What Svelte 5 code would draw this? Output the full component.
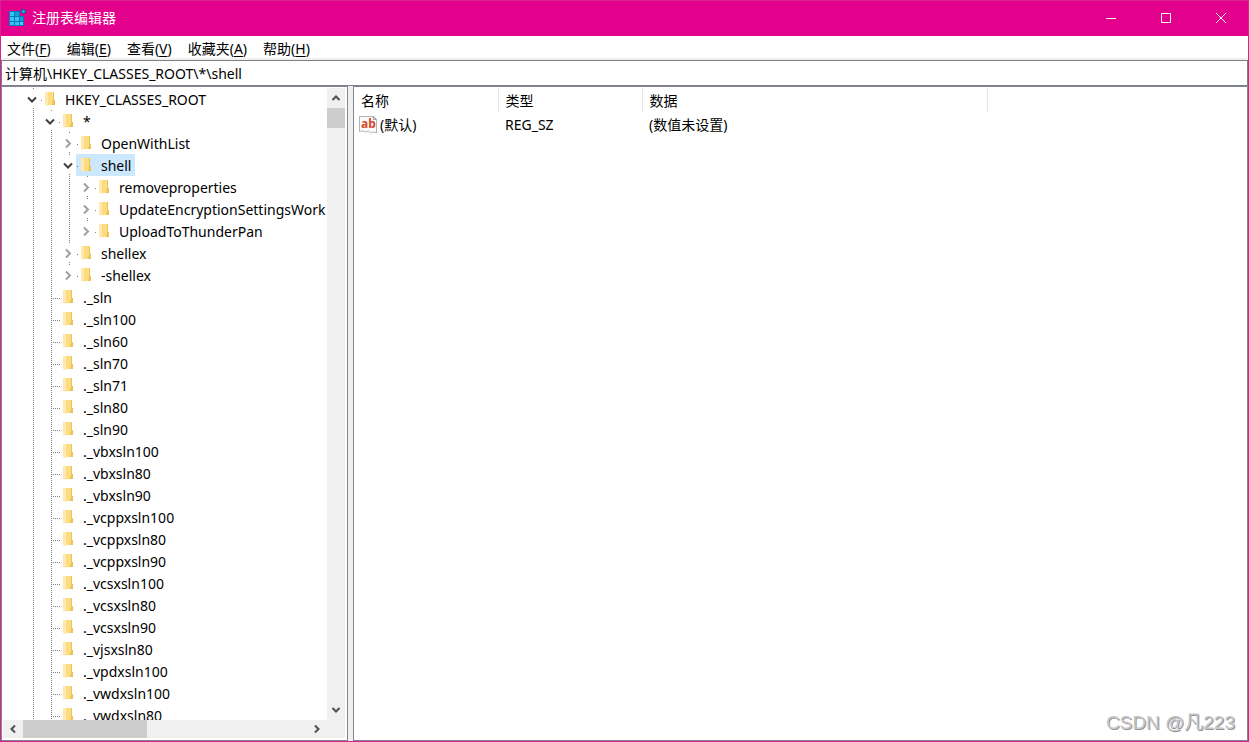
<script lang="ts">
	type Node = {
		name: string;
		// which guide columns carry a line past this row
		guides: boolean[];
		state: 'open' | 'closed' | 'leaf';
		last?: boolean;
	};

	const menus = [
		['文件', 'F'],
		['编辑', 'E'],
		['查看', 'V'],
		['收藏夹', 'A'],
		['帮助', 'H']
	];

	const leaves = [
		'._sln', '._sln100', '._sln60', '._sln70', '._sln71', '._sln80', '._sln90',
		'._vbxsln100', '._vbxsln80', '._vbxsln90',
		'._vcppxsln100', '._vcppxsln80', '._vcppxsln90',
		'._vcsxsln100', '._vcsxsln80', '._vcsxsln90',
		'._vjsxsln80', '._vpdxsln100', '._vwdxsln100', '._vwdxsln80'
	];

	const nodes: Node[] = [
		{ name: 'HKEY_CLASSES_ROOT', guides: [], state: 'open' },
		{ name: '*', guides: [true], state: 'open' },
		{ name: 'OpenWithList', guides: [true, true], state: 'closed' },
		{ name: 'shell', guides: [true, true], state: 'open' },
		{ name: 'removeproperties', guides: [true, true, true], state: 'closed' },
		{ name: 'UpdateEncryptionSettingsWork', guides: [true, true, true], state: 'closed' },
		{ name: 'UploadToThunderPan', guides: [true, true, true], state: 'closed', last: true },
		{ name: 'shellex', guides: [true, true], state: 'closed' },
		{ name: '-shellex', guides: [true, true], state: 'closed', last: true },
		...leaves.map((name): Node => ({ name, guides: [true], state: 'leaf' }))
	];

	let selected = $state('shell');
	let path = $state('计算机\\HKEY_CLASSES_ROOT\\*\\shell');
</script>

{#snippet arrow(direction: string)}
	<svg class="arrow {direction}" width="10" height="10" viewBox="0 0 10 10" aria-hidden="true">
		<path d="M1.5 3 L5 6.5 L8.5 3" />
	</svg>
{/snippet}

<div class="window">
	<header class="titlebar">
		<svg class="logo" width="17" height="17" viewBox="0 0 17 17" aria-hidden="true">
			<path fill="#0a78b8" d="M0 2h11v5h4v10H0z" />
			<path fill="#35c4f4" d="M1 3h4v4H1zM1 8h4v4H1zM6 8h4v4H6zM1 13h4v3H1zM6 13h4v3H6z" />
			<path fill="#12a0dc" d="M6 3h4v4H6zM11 8h3v4h-3z" />
			<path fill="#4fd0fa" d="M11 13h3v3h-3z" />
			<path fill="#0a5f9c" d="M14 0l3 1v3l-3 1-2-1V1z" />
			<path fill="#2fb4e8" d="M14 1l2 1v1l-2 1-1-1V2z" />
		</svg>
		<h1>注册表编辑器</h1>
		<div class="controls">
			<button type="button" aria-label="最小化">
				<svg width="10" height="10" viewBox="0 0 10 10"><path d="M0 5.5h10" /></svg>
			</button>
			<button type="button" aria-label="最大化">
				<svg width="10" height="10" viewBox="0 0 10 10"><path d="M.5 .5h9v9h-9z" /></svg>
			</button>
			<button type="button" aria-label="关闭">
				<svg width="10" height="10" viewBox="0 0 10 10"><path d="M0 0l10 10M10 0L0 10" /></svg>
			</button>
		</div>
	</header>

	<nav class="menubar">
		{#each menus as [label, key]}
			<button type="button">{label}(<u>{key}</u>)</button>
		{/each}
	</nav>

	<input class="address" type="text" aria-label="地址" bind:value={path} />

	<main class="panes">
		<section class="tree-pane">
			<ul class="tree" role="tree">
				{#each nodes as node}
					<li role="treeitem" aria-selected={selected === node.name}>
						{#each node.guides.slice(0, node.state === 'leaf' ? 0 : -1) as line}
							<span class="cell" class:line></span>
						{/each}
						{#if node.state === 'leaf'}
							<span class="cell line"></span>
							<span class="cell line stub"></span>
						{:else}
							{#if node.guides.length}<span class="cell line"></span>{/if}
							<button
								type="button"
								class="cell line expander {node.state}"
								class:last={node.last}
								aria-label={node.name}
							>
								<svg width="10" height="10" viewBox="0 0 10 10" aria-hidden="true">
									<path d={node.state === 'open' ? 'M1 3.5l4 4 4-4' : 'M3 1.5l4 4-4 4'} />
								</svg>
							</button>
						{/if}
						<button
							type="button"
							class="label"
							class:selected={selected === node.name}
							onclick={() => (selected = node.name)}
						>
							<svg width="11" height="14" viewBox="0 0 11 14" aria-hidden="true">
								<path fill="#efc052" d="M2 0h7v8h1v5H2z" />
								<path fill="#fbdc83" d="M2 0h6v9l-1 4H2z" />
								<path fill="#ffe9ae" d="M0 0h2l1 1v13l-3-1z" />
							</svg>
							<span>{node.name}</span>
						</button>
					</li>
				{/each}
			</ul>
			<div class="vbar">
				<button type="button" aria-label="向上滚动">{@render arrow('up')}</button>
				<div class="thumb"></div>
				<button type="button" class="end" aria-label="向下滚动">{@render arrow('down')}</button>
			</div>
			<div class="hbar">
				<button type="button" aria-label="向左滚动">{@render arrow('left')}</button>
				<div class="thumb"></div>
				<button type="button" class="end" aria-label="向右滚动">{@render arrow('right')}</button>
			</div>
		</section>

		<section class="list-pane">
			<table>
				<colgroup>
					<col class="name" />
					<col class="type" />
					<col class="data" />
					<col />
				</colgroup>
				<thead>
					<tr><th>名称</th><th>类型</th><th>数据</th><td></td></tr>
				</thead>
				<tbody>
					<tr>
						<td>
							<div class="value">
								<svg width="19" height="18" viewBox="0 0 19 18" aria-hidden="true">
									<path fill="#fafafa" stroke="#b4b4b4" d="M.5 .5h14l3 3v13.5l-3-1-2 1-3-2-3 1-3-1-3 .5z" />
									<path fill="#d8d8d8" stroke="#a0a0a0" d="M14.5 .5v3h3z" />
									<text x="2" y="12">ab</text>
								</svg>
								(默认)
							</div>
						</td>
						<td>REG_SZ</td>
						<td>(数值未设置)</td>
						<td></td>
					</tr>
				</tbody>
			</table>
		</section>
	</main>

	<div class="watermark">CSDN @凡223</div>
</div>

<style>
	:global(body) {
		margin: 0;
	}

	.window {
		position: relative;
		box-sizing: border-box;
		height: 100vh;
		display: flex;
		flex-direction: column;
		border: 1px solid #d9228f;
		background: #f0f0f0;
		color: #000;
		font: 14px/22px 'Noto Sans', 'Noto Sans CJK SC', sans-serif;
	}

	button {
		padding: 0;
		border: 0;
		background: none;
		color: inherit;
		font: inherit;
	}

	.titlebar {
		flex: none;
		box-sizing: border-box;
		height: 35px;
		display: flex;
		align-items: center;
		gap: 6px;
		padding: 0 0 2px 8px;
		background: #e3008c;
		color: #fff;
	}

	h1 {
		margin: 0;
		font: inherit;
	}

	.controls {
		margin-left: auto;
		display: flex;
		height: 100%;
	}

	.controls button {
		width: 55px;
		display: grid;
		place-items: center;
	}

	.controls path {
		fill: none;
		stroke: #fff;
	}

	.menubar {
		flex: none;
		height: 22px;
		display: flex;
		gap: 16px;
		padding-left: 6px;
		margin-bottom: 2px;
		background: #fff;
	}

	.menubar button {
		padding-top: 2px;
		white-space: nowrap;
	}

	u {
		text-underline-offset: 2px;
	}

	.address {
		flex: none;
		box-sizing: border-box;
		width: 100%;
		height: 26px;
		padding: 0 3px;
		border: 1px solid #7a8085;
		border-radius: 0;
		background: #fff;
		color: #000;
		font: inherit;
		outline: 0;
	}

	.panes {
		flex: 1;
		min-height: 0;
		display: grid;
		grid-template-columns: 347px minmax(0, 1fr);
		gap: 5px;
	}

	.tree-pane,
	.list-pane {
		min-height: 0;
		border: 1px solid #828790;
		background: #fff;
	}

	.tree-pane {
		display: grid;
		grid-template: minmax(0, 1fr) 18px / minmax(0, 1fr) 18px;
		padding: 1px 2px 2px 1px;
	}

	.tree {
		margin: 0;
		padding: 0 0 0 19px;
		overflow: hidden;
		list-style: none;
	}

	li {
		display: flex;
		height: 22px;
	}

	.cell {
		flex: none;
		width: 18px;
		height: 22px;
	}

	.line {
		background: repeating-linear-gradient(#808080 0 1px, transparent 1px 2px) 11px 0 / 1px 100% no-repeat;
	}

	.stub {
		background:
			repeating-linear-gradient(90deg, #808080 0 1px, transparent 1px 2px) 11px 12px / 7px 1px no-repeat,
			repeating-linear-gradient(#808080 0 1px, transparent 1px 2px) 11px 0 / 1px 100% no-repeat;
	}

	.expander {
		display: grid;
		place-items: center;
		padding-left: 2px;
	}

	.expander svg {
		padding: 4px 0;
		background: #fff;
	}

	.expander path {
		fill: none;
		stroke: #a0a0a0;
		stroke-width: 2;
	}

	.expander.open path {
		stroke: #404040;
	}

	.expander.last {
		background-size: 1px 50%;
	}

	.label {
		display: flex;
		align-items: center;
		gap: 9px;
		padding: 0 4px 0 5px;
		background: linear-gradient(#808080, #808080) 1px 12px / 1px 1px no-repeat;
		white-space: nowrap;
	}

	.label span {
		padding-top: 2px;
	}

	.label svg {
		flex: none;
	}

	.label.selected {
		background-color: #cce8ff;
	}

	.vbar,
	.hbar {
		display: flex;
		background: #f0f0f0;
	}

	.vbar {
		flex-direction: column;
	}

	.hbar {
		grid-column: 1 / -1;
		padding-right: 18px;
	}

	.vbar button,
	.hbar button {
		flex: 0 0 20px;
		display: grid;
		place-items: center;
	}

	.thumb {
		background: #cdcdcd;
	}

	.vbar .thumb {
		height: 20px;
	}

	.hbar .thumb {
		width: 124px;
	}

	.vbar .end {
		margin-top: auto;
	}

	.hbar .end {
		margin-left: auto;
	}

	.arrow path {
		fill: none;
		stroke: #505050;
		stroke-width: 2;
	}

	.up {
		transform: rotate(180deg);
	}

	.left {
		transform: rotate(90deg);
	}

	.right {
		transform: rotate(-90deg);
	}

	table {
		width: 100%;
		margin-top: 1px;
		border-collapse: collapse;
		table-layout: fixed;
	}

	.name,
	.type {
		width: 144px;
	}

	.data {
		width: 345px;
	}

	th,
	td {
		height: 22px;
		padding: 2px 0 0 7px;
		font-weight: 400;
		text-align: left;
		white-space: nowrap;
	}

	th {
		border-right: 1px solid #e5e5e5;
	}

	.value {
		display: flex;
		align-items: center;
		gap: 2px;
		margin-left: -2px;
	}

	.value text {
		fill: #d8472b;
		font: bold 12px 'Noto Sans', sans-serif;
	}

	.watermark {
		position: absolute;
		right: 13px;
		bottom: 5px;
		color: #c8c8c8;
		font: 19px/26px 'Liberation Sans', 'Noto Sans CJK SC', sans-serif;
		text-shadow: 1px 1px 0 #949494;
	}
</style>
